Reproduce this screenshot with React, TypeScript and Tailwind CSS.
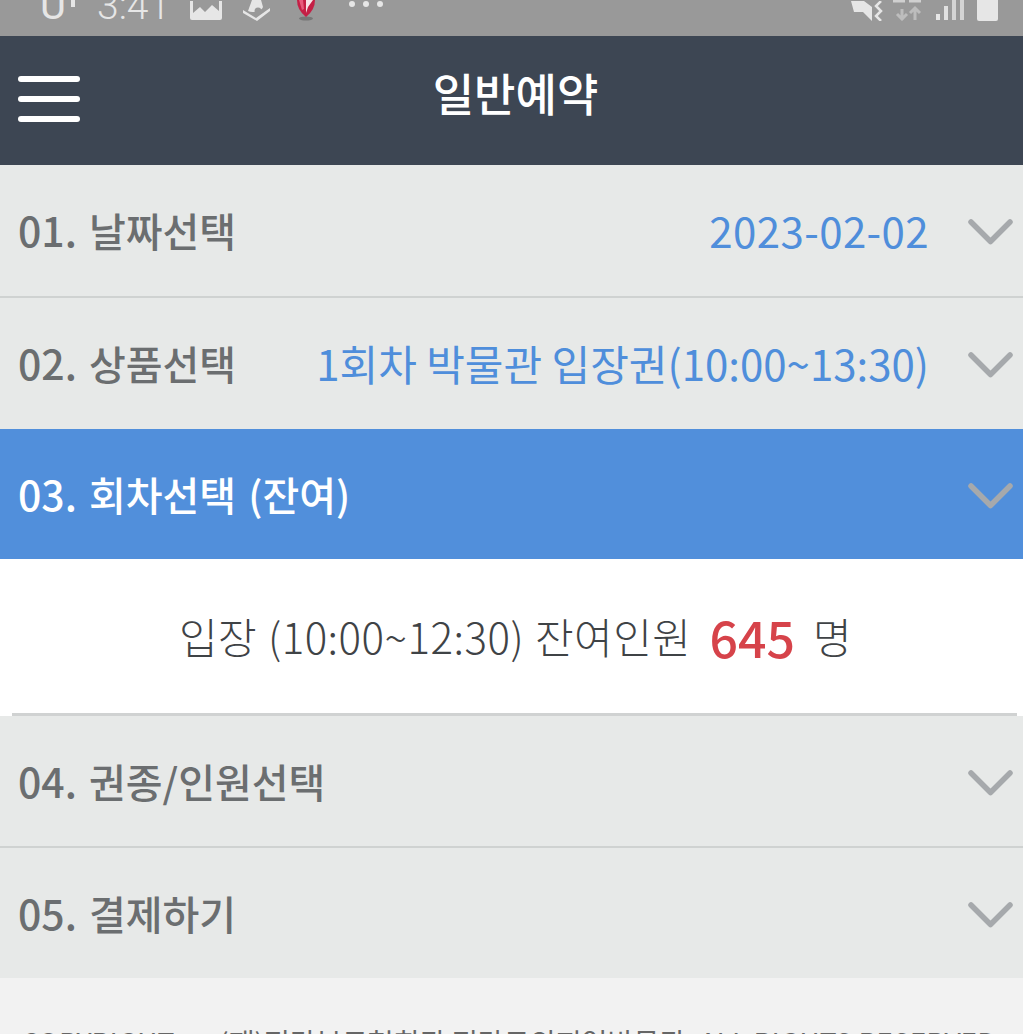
import React from "react";

const kr = "font-['Noto_Sans_CJK_KR','Noto_Sans',sans-serif]";

function Chevron() {
  return (
    <svg width="46" height="26" viewBox="0 0 46 26" className="shrink-0 mt-[3px]" fill="none">
      <path d="M3 3 L22.5 22.5 L42 3" stroke="#a6a9ac" strokeWidth="5.5" strokeLinecap="round" strokeLinejoin="round" />
    </svg>
  );
}

function Row({
  num,
  title,
  value,
  wide,
  active,
  line,
  h,
}: {
  num: string;
  title: string;
  value?: string;
  wide?: boolean;
  active?: boolean;
  line?: boolean;
  h: string;
}) {
  return (
    <div
      className={`${h} flex items-center justify-between pl-[18px] pr-[9px] ${
        active ? "bg-[#518fdb]" : "bg-[#e7e9e8]"
      } ${line ? "border-b-2 border-[#cfd2d1]" : ""}`}
    >
      <span className={`text-[40px] leading-none font-medium [word-spacing:3px] -mt-[2px] ${active ? "text-white" : "text-[#6b6e70]"}`}>
        <span className="text-[41px]">{num}</span> {title}
      </span>
      <div className="flex items-center gap-[39px]">
        {value && (
          <span className={`text-[42px] leading-none text-[#4f8edb] -mt-[2px] ${wide ? "tracking-[0.4px]" : ""}`}>{value}</span>
        )}
        <Chevron />
      </div>
    </div>
  );
}

export default function App() {
  return (
    <div className={`h-[1034px] w-full overflow-hidden bg-[#f2f2f2] ${kr}`}>
      <div className="h-9 bg-[#999999] overflow-hidden flex items-end pl-[40px] pr-[25px] justify-between pb-[15px]">
        <div className="flex items-end text-[#e6e6e6]">
          <span className="font-['Roboto',sans-serif] text-[40px] leading-[30px] w-[31px]">U</span>
          <span className="w-[4px] h-[7px] mb-[14px] bg-[#e6e6e6]" />
          <span className="font-['Roboto',sans-serif] font-light text-[39px] leading-[30px] w-[68px] ml-[22px]">3:41</span>
          <svg width="32" height="20" viewBox="0 0 32 20" className="ml-[25px]">
            <rect x="0" y="-4" width="32" height="23" rx="2" fill="#e6e6e6" />
            <path d="M3 0 H29 V10 L22 4 L15 11 L10 6 L3 12Z" fill="#999" />
          </svg>
          <svg width="28" height="21" viewBox="0 0 28 21" className="ml-[21px]">
            <path d="M9 0 H18 L20 7 A10 7 0 0 1 5 11 Z" fill="#e6e6e6" />
            <circle cx="15" cy="11" r="3.5" fill="#999" />
            <path d="M0 10 L13 18 L27 8 L27 11 L14 21 L0 13Z" fill="#e6e6e6" />
          </svg>
          <svg width="20" height="21" viewBox="0 0 20 21" className="ml-[25px]">
            <ellipse cx="10" cy="18.5" rx="7" ry="2" fill="#777" />
            <path d="M1 0 H19 Q19 10 10 17 Q1 10 1 0Z" fill="#c41f45" />
            <path d="M10 0 H17 L12 7 L10 13Z" fill="#f7e3e8" />
            <path d="M3 0 H7 L8 9 L6 10Z" fill="#e85a7c" />
          </svg>
          <div className="flex gap-[8px] ml-[33px] mb-[14px]">
            <span className="w-[6px] h-[6px] rounded-full bg-[#e6e6e6]" />
            <span className="w-[6px] h-[6px] rounded-full bg-[#e6e6e6]" />
            <span className="w-[6px] h-[6px] rounded-full bg-[#e6e6e6]" />
          </div>
        </div>
        <div className="flex items-end">
          <svg width="32" height="20" viewBox="0 0 32 20" fill="none">
            <path d="M0 0H13L21 6V20L12 11H3Z" fill="#e6e6e6" />
            <path d="M30 0 L25 5 L30 10 L25 15 L30 20" stroke="#e6e6e6" strokeWidth="2.5" />
          </svg>
          <svg width="30" height="21" viewBox="0 0 30 21" fill="none" stroke="#bdbdbd" strokeWidth="3" className="ml-[9px]">
            <path d="M10 9V20M5 14L10 19L15 14" />
            <path d="M23 20V8M18 13L23 8L28 13" />
            <path d="M1 1H13M17 1H29" stroke="#d0d0d0" />
          </svg>
          <div className="flex items-end gap-[4px] ml-[14px] mb-[1px]">
            <span className="w-[4px] h-[6px] bg-[#e6e6e6]" />
            <span className="w-[4px] h-[14px] bg-[#e0e0e0]" />
            <span className="w-[4px] h-[20px] bg-[#d4d4d4]" />
            <span className="w-[4px] h-[20px] bg-[#d4d4d4]" />
          </div>
          <span className="w-[21px] h-[21px] bg-[#e6e6e6] rounded-b-[2px] ml-[13px]" />
        </div>
      </div>

      <header className="h-[129px] bg-[#3d4653] flex items-center justify-center relative">
        <div className="absolute left-[18px] top-[40px] w-[62px] flex flex-col gap-[14px]">
          <span className="h-[6px] rounded-full bg-white" />
          <span className="h-[6px] rounded-full bg-white" />
          <span className="h-[6px] rounded-full bg-white" />
        </div>
        <h1 className="text-[45px] leading-none font-medium text-white -mt-[16px] ml-[8px]">일반예약</h1>
      </header>

      <Row h="h-[133px]" num="01." title="날짜선택" value="2023-02-02" wide line />
      <Row h="h-[131px]" num="02." title="상품선택" value="1회차 박물관 입장권(10:00~13:30)" />
      <Row h="h-[130px]" num="03." title="회차선택 (잔여)" active />

      <div className="h-[157px] bg-white flex flex-col">
        <div className="flex-1 flex items-center justify-center gap-[18px] pl-[8px] text-[42px] font-light tracking-[0.5px] [word-spacing:1px] text-[#3f4346] leading-none">
          <span>입장 (10:00~12:30) 잔여인원</span>
          <span className="text-[50px] font-medium tracking-normal text-[#d6434a]">645</span>
          <span>명</span>
        </div>
        <div className="h-[3px] ml-[12px] mr-[6px] bg-[#d0d2d2]" />
      </div>

      <Row h="h-[132px]" num="04." title="권종/인원선택" line />
      <Row h="h-[130px]" num="05." title="결제하기" />

      <footer className="h-[56px] bg-[#f2f2f2] pt-[46px] pl-[21px] whitespace-nowrap text-[28.2px] leading-[36px] text-[#666]">
        COPYRIGHT <span className="text-[14px] mx-[9px]">ⓒ</span> (재)전라북도협회관 전라도의지역박물관. ALL RIGHTS RESERVED
      </footer>
    </div>
  );
}
